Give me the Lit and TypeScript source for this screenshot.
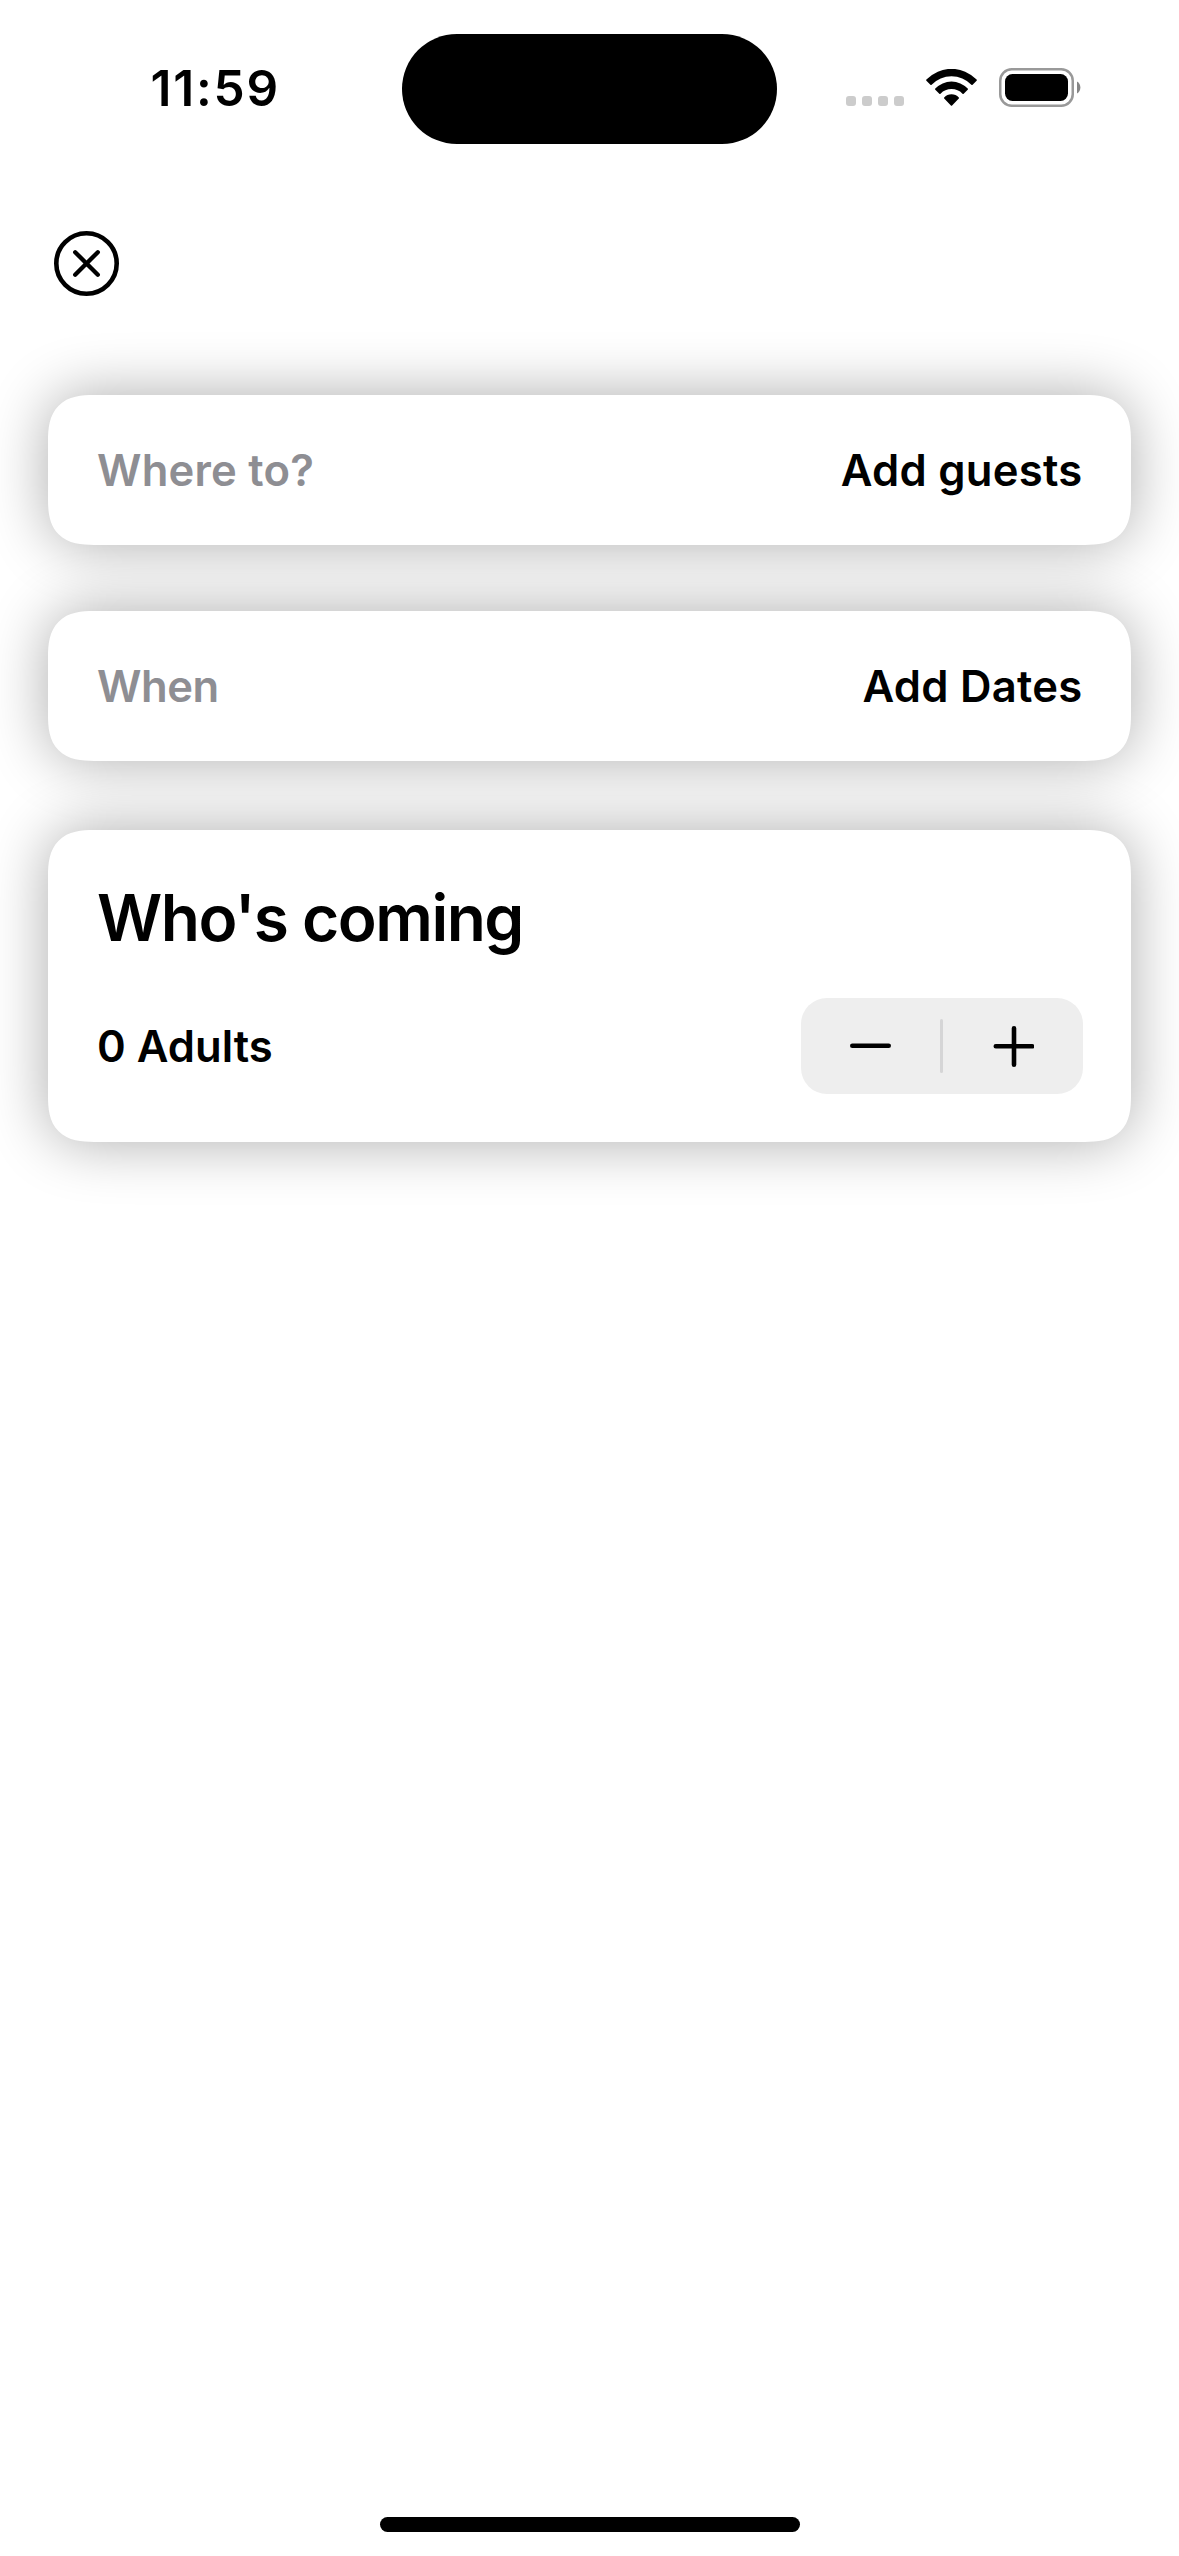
import { LitElement, html, css, svg } from "lit";
import { customElement, property, state } from "lit/decorators.js";

const cardSurface = css`
  .surface {
    box-sizing: border-box;
    border-radius: 36px;
    background: #fff;
    box-shadow: 0 0 60px rgba(0, 0, 0, 0.33);
  }
  @supports (corner-shape: superellipse(1.4)) {
    .surface {
      border-radius: 46px;
      corner-shape: superellipse(1.4);
    }
  }
`;

@customElement("status-bar")
class StatusBar extends LitElement {
  static styles = css`
    :host {
      display: grid;
      grid-template-columns: 402px 375px 402px;
      height: 144px;
      padding-top: 34px;
      box-sizing: border-box;
    }
    .time {
      display: flex;
      align-items: center;
      padding-left: 150.5px;
      font-size: 49.5px;
      font-weight: 600;
      line-height: 60px;
      padding-bottom: 2px;
      letter-spacing: 1.8px;
    }
    .island {
      height: 110px;
      border-radius: 55px;
      background: #000;
    }
    .icons {
      display: flex;
      align-items: flex-start;
      padding: 34px 0 0 69px;
    }
    .dots {
      margin-top: 28px;
      margin-right: 22px;
    }
    .wifi {
      margin-top: 1px;
      margin-right: 22px;
    }
  `;
  render() {
    return html`
      <div class="time">11:59</div>
      <div class="island"></div>
      <div class="icons">
        <svg class="dots" width="58" height="10" viewBox="0 0 58 10" fill="#ccc">
          ${[0, 16, 32, 48].map((x) => svg`<rect x=${x} width="10" height="10" rx="3" />`)}
        </svg>
        <svg class="wifi" width="51" height="37" viewBox="0 0 51 37">
          <path
            d="M.4 10.6a34.6 34.6 0 0 1 50.2 0q.5.6 0 1.1l-4 4q-.6.5-1.2 0a27.6 27.6 0 0 0-39.800 0q-.6.5-1.2 0l-4-4q-.5-.5 0-1.1zM9.3 19.600a22.2 22.2 0 0 1 32.4 0q.5.6 0 1.1l-4 4q-.6.5-1.2 0a15.4 15.4 0 0 0-22 0q-.6.5-1.2 0l-4-4q-.5-.5 0-1.1zM18.2 28.5a9.9 9.9 0 0 1 14.6 0q.5.6 0 1.1l-6.7 6.9q-.6.6-1.2 0l-6.7-6.9q-.5-.5 0-1.1z"
          />
        </svg>
        <svg class="battery" width="83" height="39" viewBox="0 0 83 39">
          <rect x="1.25" y="1.25" width="72.5" height="36.5" rx="11.5" fill="none" stroke="#999" stroke-width="2.5" />
          <rect x="6" y="6" width="63" height="27" rx="7.5" />
          <path d="M78 13.5a7 7 0 0 1 0 12z" fill="#858585" />
        </svg>
      </div>
    `;
  }
}

@customElement("collapsed-card")
class CollapsedCard extends LitElement {
  @property() label = "";
  @property() action = "";

  static styles = [
    cardSurface,
    css`
      :host {
        display: block;
      }
      .surface {
        display: flex;
        justify-content: space-between;
        align-items: center;
        height: 150px;
        padding: 2px 48.5px 0 49px;
        font-size: 43.6px;
        font-weight: 600;
        line-height: 54px;
      }
      .label {
        color: #8e8e93;
        letter-spacing: var(--label-spacing, 0.2px);
      }
      .action {
        letter-spacing: 0.27px;
      }
    `,
  ];
  render() {
    return html`
      <div class="surface">
        <span class="label">${this.label}</span>
        <span class="action">${this.action}</span>
      </div>
    `;
  }
}

@customElement("guest-stepper")
class GuestStepper extends LitElement {
  static styles = css`
    :host {
      display: grid;
      grid-template-columns: 139px 3px 140px;
      align-items: center;
      width: 282px;
      height: 96px;
      border-radius: 26px;
      background: #eeeeee;
    }
    .step {
      display: flex;
      padding: 0;
      border: 0;
      background: none;
    }
    .minus {
      padding-left: 49px;
    }
    .plus {
      padding-left: 49px;
    }
    .divider {
      height: 54px;
      border-radius: 1.5px;
      background: #d5d5d6;
    }
  `;
  private change(step: number) {
    this.dispatchEvent(new CustomEvent("step", { detail: step }));
  }
  render() {
    return html`
      <button class="step minus" @click=${() => this.change(-1)}>
        <svg width="41" height="42" viewBox="0 0 41 42" stroke="#000" stroke-width="4.6" stroke-linecap="round">
          <path d="M2.3 20.7H38.7" />
        </svg>
      </button>
      <div class="divider"></div>
      <button class="step plus" @click=${() => this.change(1)}>
        <svg width="42" height="42" viewBox="0 0 42 42" stroke="#000" stroke-width="4.6" stroke-linecap="round">
          <path d="M4.3 21.3H40.7M22.5 3.3V39.7" transform="translate(-0.5 0)" />
        </svg>
      </button>
    `;
  }
}

@customElement("app-root")
class AppRoot extends LitElement {
  @state() private adults = 0;

  static styles = [
    cardSurface,
    css`
      :host {
        display: flex;
        flex-direction: column;
        height: 2556px;
        overflow: hidden;
        background: #fff;
        color: #000;
        font-family: Inter, "Liberation Sans", sans-serif;
      }
      .close {
        align-self: flex-start;
        display: flex;
        margin: 86px 0 0 53px;
        padding: 0;
        border: 0;
        background: none;
      }
      .cards {
        display: flex;
        flex-direction: column;
        padding: 98px 48px 0;
      }
      .when {
        margin: 66px 0 69px;
        --label-spacing: -0.5px;
      }
      .guests {
        display: flex;
        flex-direction: column;
        justify-content: space-between;
        height: 312px;
        padding: 48px 48px 48px 49px;
      }
      .title {
        margin: 0;
        font-size: 64px;
        font-weight: 600;
        line-height: 80px;
        letter-spacing: -1.5px;
      }
      .row {
        display: flex;
        justify-content: space-between;
        align-items: center;
        font-size: 43.6px;
        font-weight: 600;
        line-height: 54px;
      }
      .count {
        padding-top: 2px;
      }
      .home {
        align-self: center;
        width: 420px;
        height: 15px;
        margin: auto 0 24px 1px;
        border-radius: 8px;
        background: #000;
      }
    `,
  ];

  private onStep(e: CustomEvent<number>) {
    this.adults = Math.max(0, this.adults + e.detail);
  }

  render() {
    return html`
      <status-bar></status-bar>
      <button class="close" aria-label="Close">
        <svg width="67" height="67" viewBox="0 0 67 67" fill="none" stroke="#000" stroke-linecap="round">
          <circle cx="33.5" cy="33.5" r="30.2" stroke-width="4.6" />
          <path d="M22.2 22.2L44.8 44.8M44.8 22.2L22.2 44.8" stroke-width="4.3" />
        </svg>
      </button>
      <main class="cards">
        <collapsed-card label="Where to?" action="Add guests"></collapsed-card>
        <collapsed-card class="when" label="When" action="Add Dates"></collapsed-card>
        <section class="surface guests">
          <h1 class="title">Who's coming</h1>
          <div class="row">
            <span class="count">${this.adults} Adults</span>
            <guest-stepper @step=${this.onStep}></guest-stepper>
          </div>
        </section>
      </main>
      <div class="home"></div>
    `;
  }
}
